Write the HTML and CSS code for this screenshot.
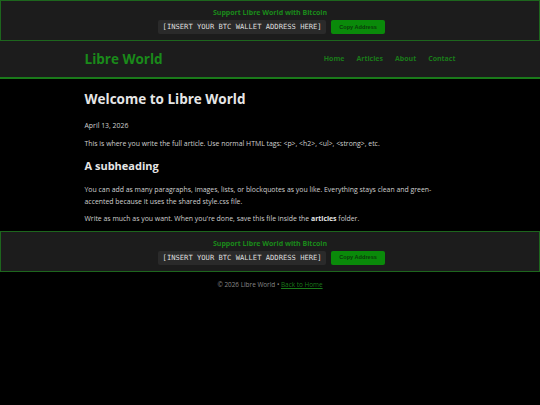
FILE: index.html
```html
<!DOCTYPE html>
<html lang="en">
<head>
<meta charset="utf-8">
<title>Libre World</title>
<link rel="stylesheet" href="styles.css">
</head>
<body>
<section class="support">
  <div class="support-title">Support Libre World with Bitcoin</div>
  <div class="support-row">
    <code class="address">[INSERT YOUR BTC WALLET ADDRESS HERE]</code>
    <button class="copy-btn">Copy Address</button>
  </div>
</section>
<header class="site-header">
  <div class="header-inner">
    <a class="logo" href="#">Libre World</a>
    <nav class="nav">
      <a href="#">Home</a>
      <a href="#">Articles</a>
      <a href="#">About</a>
      <a href="#">Contact</a>
    </nav>
  </div>
</header>
<main class="content">
  <h1>Welcome to Libre World</h1>
  <p class="date">April 13, 2026</p>
  <p>This is where you write the full article. Use normal HTML tags: &lt;p&gt;, &lt;h2&gt;, &lt;ul&gt;, &lt;strong&gt;, etc.</p>
  <h2>A subheading</h2>
  <p>You can add as many paragraphs, images, lists, or blockquotes as you like. Everything stays clean and green-accented because it uses the shared style.css file.</p>
  <p>Write as much as you want. When you're done, save this file inside the <strong>articles</strong> folder.</p>
</main>
<section class="support support-bottom">
  <div class="support-title">Support Libre World with Bitcoin</div>
  <div class="support-row">
    <code class="address">[INSERT YOUR BTC WALLET ADDRESS HERE]</code>
    <button class="copy-btn">Copy Address</button>
  </div>
</section>
<footer class="site-footer">
  &copy; 2026 Libre World &bull; <a href="#">Back to Home</a>
</footer>
</body>
</html>
```

FILE: styles.css
```css
* { box-sizing: border-box; }
html, body {
  margin: 0;
  padding: 0;
  background: #000;
}
body {
  font-family: "Open Sans", "Noto Sans", sans-serif;
  color: #d0d0d0;
  font-size: 6.9px;
  line-height: 1.75;
}
.support {
  background: #1c1c1c;
  border: 1px solid #1d661d;
  padding: 6px 0 6px;
  display: flex;
  flex-direction: column;
  align-items: center;
  gap: 2px;
}
.support-title {
  color: #1a8a1a;
  font-weight: 700;
  font-size: 7px;
  line-height: 11px;
}
.support-row {
  display: flex;
  align-items: center;
  gap: 5px;
  padding-left: 3px;
}
.address {
  font-family: "DejaVu Sans Mono", monospace;
  font-size: 7.15px;
  line-height: 10px;
  color: #dddddd;
  background: #2a2a2a;
  padding: 2px 4.5px;
  border-radius: 2px;
}
.copy-btn {
  font-family: "Liberation Sans", Arial, sans-serif;
  font-weight: 700;
  font-size: 5.6px;
  color: #0b3a0b;
  background: #0a8a0a;
  border: none;
  border-radius: 2px;
  padding: 3.5px 8px;
  line-height: 7px;
}
.site-header {
  background: #1c1c1c;
  border-bottom: 2px solid #1a7a1a;
}
.header-inner {
  width: 371px;
  margin: 0 auto;
  height: 36px;
  display: flex;
  align-items: center;
  justify-content: space-between;
}
.logo {
  color: #1a8a1a;
  font-weight: 700;
  font-size: 13.5px;
  text-decoration: none;
  line-height: 1.2;
}
.nav {
  display: flex;
  gap: 12px;
}
.nav a {
  color: #1a7a1a;
  font-weight: 700;
  font-size: 7px;
  text-decoration: none;
}
.content {
  width: 371px;
  margin: 0 auto;
  padding: 12px 0 0;
}
.content h1 {
  font-size: 13.5px;
  line-height: 16px;
  margin: 0 0 13px;
  color: #e6e6e6;
  font-weight: 700;
}
.content p {
  margin: 0 0 5.5px;
}
.content h2 {
  font-size: 11px;
  line-height: 13px;
  margin: 9px 0 12px;
  color: #e6e6e6;
  font-weight: 700;
}
.content strong {
  color: #e6e6e6;
}
.site-footer {
  text-align: center;
  color: #888;
  font-size: 6.4px;
  line-height: 12px;
  margin-top: 7px;
}
.site-footer a {
  color: #1a7a1a;
}
```
